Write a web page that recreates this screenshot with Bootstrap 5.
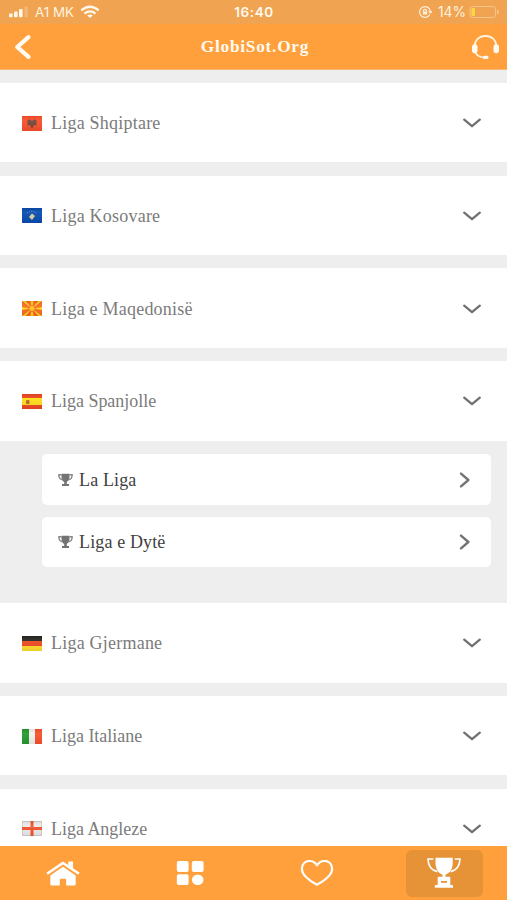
<!DOCTYPE html>
<html lang="sq">
<head>
<meta charset="utf-8">
<meta name="viewport" content="width=device-width, initial-scale=1">
<title>GlobiSot.Org</title>
<link href="https://cdn.jsdelivr.net/npm/bootstrap@5.3.0/dist/css/bootstrap.min.css" rel="stylesheet">
<style>
body{height:900px;overflow:hidden;background:#eee;font-family:"Liberation Serif",serif}
svg{display:block;flex:none}
.screen{height:900px}
.status{height:23.5px;background:#f0a452;color:#fff3df;font:14px/24px Inter,sans-serif;padding:0 8px 0 9px}
.status>div{flex:1 1 0}
.clock{font-weight:600;font-size:13.5px;letter-spacing:.6px;color:#fffaf0}
.carrier{margin:0 6px;font-size:13.4px}
.charge{margin:0 3px 0 6px;font-size:13.8px}
.topbar{height:46.3px;background:#ffa03c;color:#fffaf0;padding:2px 7px 0 14px;border-bottom:1px solid #f8b873}
.brand{font-size:17.3px;font-weight:700;letter-spacing:.75px;line-height:20px;margin-right:3px}
.leagues{padding-top:13px;gap:13.2px}
.league{height:79.6px;padding:1px 25px 0 22px;color:#7b7b7b;font-size:18px;letter-spacing:.22px;line-height:24px}
.league span{margin-left:9px}
.league .tight{letter-spacing:-.02px}
.sub{margin-top:-13.2px;height:149.1px;padding:13.2px 16.3px 0 42px;gap:12px}
.cup{height:50.6px;border-radius:5px;padding:1px 20px 0 16px;color:#414141;font-size:18px;letter-spacing:.14px;line-height:24px}
.cup span{margin-left:6px}
.tabs{height:54px;background:#ffa03c}
.tabs a{flex:1 1 0}
.tab-on{width:77px;height:47px;border-radius:6px;background:#e69236;margin-left:1px}
</style>
</head>
<body>
<svg width="0" height="0" class="position-absolute">
<defs>
<symbol id="down" viewBox="0 0 20 12"><path d="M2.2 2.7 10 9.2l7.800-6.500" fill="none" stroke="#717171" stroke-width="2.300" stroke-linecap="round" stroke-linejoin="round"/></symbol>
<symbol id="next" viewBox="0 0 12 18"><path d="M2 2.600 9.400 9 2 15.400" fill="none" stroke="#737373" stroke-width="2.400" stroke-linecap="round" stroke-linejoin="round"/></symbol>
<symbol id="cupicon" viewBox="0 0 15 14"><path d="M3.500.8h8v3.700Q11.300 8 8.800 8.900v2h2.200V13H4v-2.100h2.200v-2Q3.700 8 3.500 4.500z" fill="#747474"/><path d="M3.600 1.800H.9q-.2 4.400 3.600 4.900M11.400 1.800h2.700q.2 4.400-3.600 4.900" fill="none" stroke="#858585" stroke-width="1.400"/></symbol>
<linearGradient id="gloss" x2="0" y2="1"><stop stop-color="#000" stop-opacity=".08"/><stop offset=".3" stop-color="#fff" stop-opacity=".06"/><stop offset="1" stop-color="#000" stop-opacity=".07"/></linearGradient>
</defs>
</svg>
<div class="screen d-flex flex-column">
<div class="status d-flex align-items-center flex-shrink-0">
<div class="d-flex align-items-center">
<svg width="20" height="14" viewBox="0 0 20 14" fill="#fff8eb"><rect y="8.500" width="3.600" height="3.800" rx="1"/><rect x="5" y="6.500" width="3.600" height="5.800" rx="1"/><rect x="10" y="4" width="3.600" height="8.300" rx="1"/><rect x="15.500" y="1.500" width="3.300" height="10.800" rx="1" opacity=".25"/></svg>
<span class="carrier">A1 MK</span>
<svg width="20" height="14" viewBox="0 0 20 14" fill="none" stroke="#fff8eb" stroke-width="2.300"><path d="M1.300 5.400Q10-2 18.700 5.400M4.500 8.600q5.500-4.400 11 0"/><path d="m10 13-2.800-2.500q2.800-2 5.600 0z" fill="#fff8eb" stroke="none"/></svg>
</div>
<span class="clock">16:40</span>
<div class="d-flex align-items-center justify-content-end">
<svg width="14" height="14" viewBox="0 0 14 14" fill="none" stroke="#fff1dc" stroke-width="1.200"><path d="M11.800 9.500A5.400 5.400 0 1 1 12.400 7M10.600 6.200l1.800 1.800L14 6.200"/><path d="M5.500 6.500V5.300q1.500-2 3 0v1.200"/><rect x="4.800" y="6.500" width="4.400" height="3" fill="#fff1dc" stroke="none"/></svg>
<span class="charge">14%</span>
<svg width="30" height="14" viewBox="0 0 30 14"><rect x="1" y="1.500" width="25.500" height="11" rx="2.500" fill="none" stroke="#f7c48c"/><path d="M28 4.500v5q2-1 2-2.500t-2-2.500" fill="#f7c48c"/><rect x="2.500" y="3" width="3.500" height="8" rx="1" fill="#fbd843"/></svg>
</div>
</div>
<header class="topbar d-flex align-items-center justify-content-between flex-shrink-0">
<svg width="28" height="28" viewBox="0 0 28 28"><path d="M14.500 4.200 3.200 14l11.300 9.800" fill="none" stroke="#fffaf2" stroke-width="4.200" stroke-linecap="round" stroke-linejoin="round"/></svg>
<div class="brand">GlobiSot.Org</div>
<svg width="29" height="28" viewBox="0 0 29 28"><path d="M4 14.500C3 7.500 8 3 14.500 3S26 7.500 25 14.500M4.200 19q2.300 5.500 9.800 5.500" fill="none" stroke="#fff3df" stroke-width="1.800"/><rect x="1" y="11.200" width="5.500" height="9" rx="2.700" fill="#fffaf2"/><rect x="22.500" y="11.200" width="5.500" height="9" rx="2.700" fill="#fffaf2"/><rect x="12" y="22.800" width="5.500" height="3.200" rx="1.600" fill="#fffaf2"/></svg>
</header>
<main class="leagues d-flex flex-column flex-grow-1 overflow-hidden">
<div class="league bg-white d-flex align-items-center flex-shrink-0"><svg width="20" height="15"><rect width="20" height="15" fill="#f9502a"/><path d="m5.500 4 2.500-.5 2 1.500 2-1.500 2.500.5v5.500L12 9l-2 4-2-4-2.500.5z" fill="#75463a"/><rect width="20" height="15" fill="url(#gloss)"/></svg><span>Liga Shqiptare</span><svg class="ms-auto" width="20" height="12"><use href="#down"/></svg></div>
<div class="league bg-white d-flex align-items-center flex-shrink-0"><svg width="20" height="15"><rect width="20" height="15" fill="#084db0"/><path d="m10 5.500 3 2.500-3 4-3-3z" fill="#d9cf9b"/><path d="M5 5q5-3.500 10 0" fill="none" stroke="#6996ce" stroke-dasharray="1 1.200"/><rect width="20" height="15" fill="url(#gloss)"/></svg><span>Liga Kosovare</span><svg class="ms-auto" width="20" height="12"><use href="#down"/></svg></div>
<div class="league bg-white d-flex align-items-center flex-shrink-0"><svg width="20" height="15"><rect width="20" height="15" fill="#f86a20"/><path d="M0 0h3.500L10 7.500 16.500 0H20L10 7.500 20 15h-3.500L10 7.500 3.500 15H0l10-7.500zM8.500 0h3L10 7.500zM8.500 15h3L10 7.500zM0 6v3l10-1.500zM20 6v3L10 7.500z" fill="#ffd21f"/><circle cx="10" cy="7.500" r="3" fill="#ffc51e" stroke="#f46b22" stroke-width=".8"/><rect width="20" height="15" fill="url(#gloss)"/></svg><span>Liga e Maqedonisë</span><svg class="ms-auto" width="20" height="12"><use href="#down"/></svg></div>
<div class="league bg-white d-flex align-items-center flex-shrink-0"><svg width="20" height="15"><rect width="20" height="15" fill="#ee4721"/><rect y="4" width="20" height="7" fill="#ffdc18"/><rect x="4" y="6" width="3.500" height="4" rx="1" fill="#b56a25"/><rect width="20" height="15" fill="url(#gloss)"/></svg><span class="tight">Liga Spanjolle</span><svg class="ms-auto" width="20" height="12"><use href="#down"/></svg></div>
<div class="sub d-flex flex-column flex-shrink-0">
<div class="cup bg-white d-flex align-items-center"><svg width="15" height="14"><use href="#cupicon"/></svg><span>La Liga</span><svg class="ms-auto" width="12" height="18"><use href="#next"/></svg></div>
<div class="cup bg-white d-flex align-items-center"><svg width="15" height="14"><use href="#cupicon"/></svg><span>Liga e Dytë</span><svg class="ms-auto" width="12" height="18"><use href="#next"/></svg></div>
</div>
<div class="league bg-white d-flex align-items-center flex-shrink-0"><svg width="20" height="15"><rect width="20" height="5" fill="#282522"/><rect y="5" width="20" height="5" fill="#ec4a22"/><rect y="10" width="20" height="5" fill="#ffdc2c"/><rect width="20" height="15" fill="url(#gloss)"/></svg><span>Liga Gjermane</span><svg class="ms-auto" width="20" height="12"><use href="#down"/></svg></div>
<div class="league bg-white d-flex align-items-center flex-shrink-0"><svg width="20" height="15"><rect width="20" height="15" fill="#f4f1ed"/><rect width="7" height="15" fill="#259a2e"/><rect x="13" width="7" height="15" fill="#f8502c"/><rect width="20" height="15" fill="url(#gloss)"/></svg><span class="tight">Liga Italiane</span><svg class="ms-auto" width="20" height="12"><use href="#down"/></svg></div>
<div class="league bg-white d-flex align-items-center flex-shrink-0"><svg width="20" height="15"><rect x=".5" y=".5" width="19" height="14" fill="#eceaea" stroke="#d3cfcd"/><path d="M8.500 0h3v6H20v3h-8.500v6h-3V9H0V6h8.500z" fill="#f2522c"/><rect width="20" height="15" fill="url(#gloss)"/></svg><span class="tight">Liga Angleze</span><svg class="ms-auto" width="20" height="12"><use href="#down"/></svg></div>
</main>
<nav class="tabs d-flex flex-shrink-0">
<a href="#" aria-label="Home" class="d-flex align-items-center justify-content-center"><svg width="36" height="28" viewBox="0 0 34 28" preserveAspectRatio="none" fill="#fff"><path d="m1.200 13.800 15.300-11q.5-.3 1 0l4.500 3.200V2.500h4.500v6.800l6.300 4.500-1.500 2L17 5.600 2.700 15.800z"/><path d="M17 7.700 29 16.500V25q0 1.500-1.500 1.500H20V21q0-1.200-1.200-1.200h-3.600Q14 19.800 14 21v5.500H6.500Q5 26.500 5 25v-8.500z"/></svg></a>
<a href="#" aria-label="Categories" class="d-flex align-items-center justify-content-center"><svg width="28" height="26" viewBox="0 0 28 26" fill="#fff"><rect x=".8" y="1" width="11.800" height="11" rx="2"/><rect x="15.800" y="1" width="11.800" height="11" rx="2"/><rect x=".8" y="14.300" width="11.800" height="10.700" rx="2"/><ellipse cx="21.700" cy="19.700" rx="5.800" ry="5.300"/></svg></a>
<a href="#" aria-label="Favorites" class="d-flex align-items-center justify-content-center"><svg width="36" height="28" viewBox="0 0 36 28"><path d="M18 6.500C14.500.2 6 .8 3.500 6.500c-1.600 4.300.2 8.300 3.500 11.500q4.500 4.500 11 7.800 6.500-3.300 11-7.800c3.300-3.200 5.100-7.200 3.500-11.500C30 .8 21.500.2 18 6.500z" fill="none" stroke="#fff" stroke-width="2.100" stroke-linejoin="round"/></svg></a>
<a href="#" aria-label="Leagues" class="d-flex align-items-center justify-content-center"><div class="tab-on d-flex align-items-center justify-content-center"><svg width="36" height="32" viewBox="0 0 36 32" fill="#fff"><path d="M9.500.8h17.200v6.700Q25.800 15.700 19.500 17.700v2h4q.8 0 .8.800V28h1.700q1 0 1 1.200v1.500H8.800v-1.500q0-1.200 1-1.200h1.900v-7.500q0-.8.800-.8h4v-2Q10.400 15.700 9.500 7.500z"/><path d="M7.400 2H2q.2 10.500 9.300 12.600M28.800 2h5.200q-.3 10.500-9.300 12.600" fill="none" stroke="#fff" stroke-width="1.600"/><rect x="15" y="24" width="6" height="1.800" fill="#e69236"/></svg></div></a>
</nav>
</div>
<script src="https://cdn.jsdelivr.net/npm/bootstrap@5.3.0/dist/js/bootstrap.bundle.min.js"></script>
</body>
</html>
